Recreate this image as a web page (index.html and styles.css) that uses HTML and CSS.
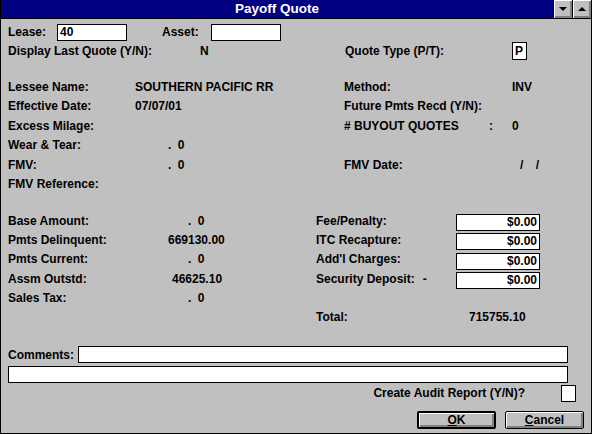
FILE: index.html
```html
<!DOCTYPE html>
<html lang="en">
<head>
    <meta charset="UTF-8">
    <title>Payoff Quote</title>
    <link rel="stylesheet" href="styles.css">
</head>
<body>

<div class="window">
    <div class="titlebar">
        <span class="title">Payoff Quote</span>
        <div class="tbtns">
            <span class="tbtn"><span class="arrow-down"></span></span>
            <span class="tbtn"><span class="arrow-up"></span></span>
        </div>
    </div>

    <div class="content">
        <div class="row1">
            <span class="lbl-short">Lease:</span>
            <span class="field">40</span>
            <span class="lbl-short asset">Asset:</span>
            <span class="field"></span>
        </div>

        <div class="row2">
            <span>Display Last Quote (Y/N):</span>
            <span>N</span>
            <span>Quote Type (P/T):</span>
            <span class="pbox">P</span>
        </div>

        <!-- lessee details -->
        <div class="g1">
            <span>Lessee Name:</span>
            <span>SOUTHERN PACIFIC RR</span>
            <span>Method:</span>
            <span>INV</span>

            <span>Effective Date:</span>
            <span>07/07/01</span>
            <span>Future Pmts Recd (Y/N):</span>
            <span></span>

            <span>Excess Milage:</span>
            <span></span>
            <span class="buyout"># BUYOUT QUOTES <span class="colon">:</span></span>
            <span>0</span>

            <span>Wear &amp; Tear:</span>
            <span class="v1">. 0</span>
            <span></span>
            <span></span>

            <span>FMV:</span>
            <span class="v1">. 0</span>
            <span>FMV Date:</span>
            <span class="date">/ /</span>

            <span>FMV Reference:</span>
            <span></span>
            <span></span>
            <span></span>
        </div>

        <!-- amounts -->
        <div class="g2">
            <span>Base Amount:</span>
            <span class="v-dot">. 0</span>
            <span>Fee/Penalty:</span>
            <span class="money">$0.00</span>

            <span>Pmts Delinquent:</span>
            <span class="v1">669130.00</span>
            <span>ITC Recapture:</span>
            <span class="money">$0.00</span>

            <span>Pmts Current:</span>
            <span class="v-dot">. 0</span>
            <span>Add'l Charges:</span>
            <span class="money">$0.00</span>

            <span>Assm Outstd:</span>
            <span class="v2">46625.10</span>
            <span>Security Deposit:<span class="dash">-</span></span>
            <span class="money">$0.00</span>

            <span>Sales Tax:</span>
            <span class="v-dot">. 0</span>
            <span></span>
            <span></span>

            <span></span>
            <span></span>
            <span>Total:</span>
            <span class="total">715755.10</span>
        </div>

        <div class="comments">
            <span class="lbl-comments">Comments:</span>
            <span class="box comment1"></span>
        </div>
        <div class="box comment2"></div>

        <div class="audit">
            <span>Create Audit Report (Y/N)?</span>
            <span class="box audit-box"></span>
        </div>

        <div class="buttons">
            <span class="btn default"><u>O</u>K</span>
            <span class="btn"><u>C</u>ancel</span>
        </div>
    </div>
</div>

</body>
</html>
```

FILE: styles.css
```css
body {
    margin: 0;
    font-family: "Liberation Sans", Arial, sans-serif;
    font-size: 12px;
    font-weight: bold;
    color: #000;
}

.window {
    width: 592px;
    height: 434px;
    box-sizing: border-box;
    border: 1px solid #000;
    border-top: 0;
    background: #c0c0c0;
}

/* title bar */
.titlebar {
    display: flex;
    height: 18px;
    background: #000080;
    border-bottom: 1px solid #000;
}

.title {
    flex: 1;
    text-align: center;
    color: #fff;
    font-size: 13.5px;
    line-height: 18px;
}

.tbtns {
    display: flex;
    border-left: 1px solid #000;
}

.tbtn {
    width: 18px;
    height: 18px;
    background: #c0c0c0;
    box-shadow: inset 1px 1px #fff, inset -2px -2px #808080;
    display: flex;
    align-items: center;
    justify-content: center;
}

.tbtn + .tbtn {
    border-left: 1px solid #000;
}

.arrow-down {
    width: 0;
    height: 0;
    border-left: 4px solid transparent;
    border-right: 4px solid transparent;
    border-top: 4px solid #000;
}

.arrow-up {
    width: 0;
    height: 0;
    border-left: 4px solid transparent;
    border-right: 4px solid transparent;
    border-bottom: 4px solid #000;
}

/* form body */
.content {
    padding: 4px 0 0 7px;
}

.row1 {
    display: flex;
    align-items: center;
    height: 19px;
    line-height: 19px;
}

.lbl-short {
    width: 49px;
}

.asset {
    margin-left: 35px;
}

.field {
    width: 70px;
    height: 17px;
    box-sizing: border-box;
    border: 1px solid #000;
    background: #fff;
    padding-left: 2px;
    line-height: 15px;
}

.row2 {
    display: grid;
    grid-template-columns: 192px 145px 167px auto;
    height: 19px;
    line-height: 19px;
}

.pbox {
    width: 15px;
    height: 18px;
    box-sizing: border-box;
    border: 1px solid #000;
    background: #fff;
    padding-left: 2px;
    line-height: 16px;
}

.g1 {
    display: grid;
    grid-template-columns: 127px 209px 168px auto;
    grid-auto-rows: 19.4px;
    line-height: 19.4px;
    margin-top: 17px;
}

.v1 {
    padding-left: 33px;
    word-spacing: 3px;
}

.v2 {
    padding-left: 37px;
}

.v-dot {
    padding-left: 53px;
    word-spacing: 3px;
}

.buyout {
    display: flex;
}

.colon {
    margin-left: auto;
    margin-right: 19px;
}

.date {
    padding-left: 8px;
    word-spacing: 9px;
}

.g2 {
    display: grid;
    grid-template-columns: 127px 181px 140px 84px;
    grid-auto-rows: 19.35px;
    line-height: 19.35px;
    margin-top: 17.4px;
}

.money {
    height: 17px;
    box-sizing: border-box;
    border: 1px solid #000;
    background: #fff;
    text-align: right;
    padding-right: 2px;
    line-height: 15px;
    align-self: center;
    margin-top: 2px;
}

.dash {
    margin-left: 8px;
}

.total {
    padding-left: 13px;
}

/* comments */
.box {
    height: 17px;
    box-sizing: border-box;
    border: 1px solid #000;
    background: #fff;
}

.comments {
    display: flex;
    align-items: center;
    height: 18px;
    line-height: 18px;
    margin-top: 18px;
}

.lbl-comments {
    width: 70px;
}

.comment1 {
    width: 490px;
}

.comment2 {
    width: 560px;
    margin-top: 2px;
}

.audit {
    display: flex;
    justify-content: flex-end;
    align-items: center;
    gap: 36px;
    height: 19px;
    line-height: 19px;
    margin-top: 1px;
    padding-right: 15px;
}

.audit-box {
    width: 15px;
}

/* buttons */
.buttons {
    display: flex;
    justify-content: flex-end;
    gap: 9px;
    margin-top: 8px;
    padding-right: 7px;
}

.btn {
    width: 79px;
    height: 18px;
    box-sizing: border-box;
    border: 1px solid #000;
    border-radius: 2px;
    background: #c0c0c0;
    box-shadow: inset 1px 1px #fff, inset -2px -2px #808080;
    text-align: center;
    line-height: 16px;
}

.btn.default {
    border-width: 2px;
    line-height: 14px;
}
```
